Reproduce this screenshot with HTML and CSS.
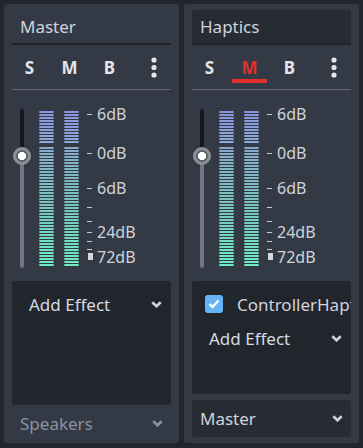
FILE: index.html
```html
<!DOCTYPE html>
<html>
<head>
  <meta charset=utf-8>
  <title>Audio Buses</title>
  <link rel="stylesheet" href="styles.css">
</head>
<body>

<div class=bus>
  <div class=bus-name>Master</div>
  <div class=toggles>
    <span class=toggle>S</span>
    <span class=toggle>M</span>
    <span class=toggle>B</span>
    <span class="toggle toggle-menu"><svg width=6 height=21 viewBox="0 0 6 21"><circle cx=3 cy=3 r=2.6 /><circle cx=3 cy=10.5 r=2.6 /><circle cx=3 cy=18 r=2.6 /></svg></span>
  </div>
  <div class=sep></div>
  <div class=mixer>
    <div class=fader><div class=track></div><div class=knob></div></div>
    <div class="meter meter-left"><div class=peak></div><div class=level></div></div>
    <div class=meter><div class=peak></div><div class=level></div></div>
    <div class=scale>
      <i style='top:24px'></i><i style='top:63px'></i><i style='top:98px'></i><i style='top:117px'></i>
      <i style='top:131px'></i><i style='top:142px'></i><i style='top:151px'></i><i style='top:159px'></i>
      <b style='top:163px'></b>
      <span style='top:16px'>6dB</span><span style='top:55px'>0dB</span><span style='top:90px'>6dB</span>
      <span style='top:134px'>24dB</span><span style='top:159px'>72dB</span>
    </div>
  </div>
  <div class="effects effects-tall">
    <div class=add-effect>Add Effect <svg class=chev width=11 height=7 viewBox="0 0 11 7"><polyline points="1.3,1.3 5.5,5.3 9.7,1.3" /></svg></div>
  </div>
  <div class="send send-flat">Speakers <svg class=chev width=11 height=7 viewBox="0 0 11 7"><polyline points="1.3,1.3 5.5,5.3 9.7,1.3" /></svg></div>
</div>

<div class=bus>
  <div class="bus-name bus-name-edit">Haptics</div>
  <div class=toggles>
    <span class=toggle>S</span>
    <span class="toggle toggle-on">M</span>
    <span class=toggle>B</span>
    <span class="toggle toggle-menu"><svg width=6 height=21 viewBox="0 0 6 21"><circle cx=3 cy=3 r=2.6 /><circle cx=3 cy=10.5 r=2.6 /><circle cx=3 cy=18 r=2.6 /></svg></span>
  </div>
  <div class=sep></div>
  <div class=mixer>
    <div class=fader><div class=track></div><div class=knob></div></div>
    <div class="meter meter-left"><div class=peak></div><div class=level></div></div>
    <div class=meter><div class=peak></div><div class=level></div></div>
    <div class=scale>
      <i style='top:24px'></i><i style='top:63px'></i><i style='top:98px'></i><i style='top:117px'></i>
      <i style='top:131px'></i><i style='top:142px'></i><i style='top:151px'></i><i style='top:159px'></i>
      <b style='top:163px'></b>
      <span style='top:16px'>6dB</span><span style='top:55px'>0dB</span><span style='top:90px'>6dB</span>
      <span style='top:134px'>24dB</span><span style='top:159px'>72dB</span>
    </div>
  </div>
  <div class=effects>
    <div class=effect><span class=check><svg width=12 height=10 viewBox="0 0 12 10"><polyline points="1.5,5 4.5,8 10.5,1.5" /></svg></span><span class=effect-name>ControllerHaptics</span></div>
    <div class=add-effect>Add Effect <svg class=chev width=11 height=7 viewBox="0 0 11 7"><polyline points="1.3,1.3 5.5,5.3 9.7,1.3" /></svg></div>
  </div>
  <div class=send>Master <svg class=chev width=11 height=7 viewBox="0 0 11 7"><polyline points="1.3,1.3 5.5,5.3 9.7,1.3" /></svg></div>
</div>

</body>
</html>
```

FILE: styles.css
```css
* {
  box-sizing: border-box;
  }
html, body {
  margin: 0;
  width: 363px;
  height: 448px;
  }
body {
  display: flex;
  gap: 5px;
  padding: 4px;
  background-color: #21252c;
  font: normal 17px "Noto Sans", sans-serif;
  color: #cfd3db;
  overflow: hidden;
  }
.bus {
  width: 175px;
  height: 439px;
  padding: 6px 8px 0;
  background-color: #343a45;
  border-radius: 3px;
  display: flex;
  flex-direction: column;
  flex: none;
  }
.bus-name {
  height: 35px;
  padding: 0 8px;
  display: flex;
  align-items: center;
  border-bottom: 2px solid #1f232a;
  border-radius: 3px 3px 0 0;
  }
.bus-name-edit {
  background-color: #262b34;
  }
.toggles {
  display: flex;
  gap: 5px;
  height: 32px;
  margin-top: 6px;
  }
.toggle {
  width: 35px;
  display: flex;
  align-items: center;
  justify-content: center;
  font: bold 17px "Noto Sans", sans-serif;
  color: #e3e5e9;
  }
.toggle-on {
  color: #e2302f;
  box-shadow: inset 0 -4px 0 #e2302f;
  }
.toggle-menu {
  margin-left: auto;
  }
.toggle-menu circle {
  fill: #e3e5e9;
  }
.sep {
  height: 1px;
  margin-top: 6px;
  background-color: #62666f;
  }
.mixer {
  height: 191px;
  padding-top: 19px;
  display: flex;
  }
.fader {
  width: 20px;
  height: 159px;
  position: relative;
  }
.track {
  width: 4px;
  height: 100%;
  margin-left: 8px;
  border-radius: 2px;
  background: linear-gradient(#15181d 0 47px, #737782 47px);
  }
.knob {
  position: absolute;
  left: 1px;
  top: 38px;
  width: 18px;
  height: 18px;
  border-radius: 50%;
  border: 3px solid #8d9098;
  background: radial-gradient(circle, #fff 0 3.8px, #5b5f67 4.4px);
  }
.meter {
  width: 15px;
  margin: 2px 0 0 10px;
  }
.meter-left {
  margin-left: 7px;
  }
.peak {
  height: 33px;
  background:
    linear-gradient(to right, rgba(52,58,69,.35) 0 1px, transparent 1px 14px, rgba(52,58,69,.35) 14px),
    repeating-linear-gradient(transparent 0 2px, #343a45 2px 3px),
    linear-gradient(#8e94e0, #89abd8);
  }
.level {
  height: 120px;
  margin-top: 3px;
  background:
    linear-gradient(to right, rgba(52,58,69,.35) 0 1px, transparent 1px 14px, rgba(52,58,69,.35) 14px),
    repeating-linear-gradient(transparent 0 2px, #343a45 2px 3px),
    linear-gradient(#88aacd, #7ac2be 45%, #6deec3);
  }
.scale {
  position: relative;
  flex: 1;
  margin-top: -19px;
  }
.scale i {
  position: absolute;
  left: 8px;
  width: 5px;
  height: 1px;
  background-color: #c9cdd5;
  }
.scale b {
  position: absolute;
  left: 9px;
  width: 5px;
  height: 7px;
  background-color: #d5d8de;
  }
.scale span {
  position: absolute;
  left: 18px;
  font-size: 16px;
  line-height: 16px;
  color: #cfd3db;
  }
.effects {
  height: 113px;
  padding-top: 6px;
  background-color: #21252c;
  border-radius: 3px;
  overflow: hidden;
  }
.effects-tall {
  height: 124px;
  }
.effect {
  height: 34px;
  padding-left: 13px;
  display: flex;
  align-items: center;
  white-space: nowrap;
  }
.effect-name {
  overflow: hidden;
  }
.check {
  width: 18px;
  height: 18px;
  margin-right: 14px;
  flex: none;
  display: flex;
  align-items: center;
  justify-content: center;
  border-radius: 3px;
  background-color: #65b4f8;
  }
.check polyline {
  fill: none;
  stroke: #fff;
  stroke-width: 2.4;
  }
.add-effect {
  height: 34px;
  padding: 0 9px 0 17px;
  display: flex;
  align-items: center;
  justify-content: space-between;
  color: #d6dae2;
  }
.chev polyline {
  fill: none;
  stroke: #d0d3d9;
  stroke-width: 2.6;
  }
.send {
  height: 37px;
  margin-top: 6px;
  padding: 0 8px;
  display: flex;
  align-items: center;
  justify-content: space-between;
  background-color: #262b34;
  border-radius: 3px;
  }
.send-flat {
  margin-top: 0;
  background: none;
  color: #8b929e;
  }
.send-flat .chev polyline {
  stroke: #8b929e;
  }
```
